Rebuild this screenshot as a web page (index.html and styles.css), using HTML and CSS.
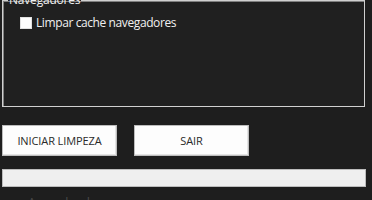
FILE: index.html
```html
<!DOCTYPE html>
<html lang="pt">
<head>
  <meta charset="UTF-8">
  <title>Limpeza</title>
  <meta name="viewport" content="width=device-width, initial-scale=1.0">
  <link rel="stylesheet" href="styles.css">
</head>
<body>

  <fieldset class="group">
    <legend>Navegadores</legend>
    <label class="check">
      <input type="checkbox" id="chkCache">
      <span>Limpar cache navegadores</span>
    </label>
  </fieldset>

  <div class="actions">
    <button id="btnIniciar">INICIAR LIMPEZA</button>
    <button id="btnSair">SAIR</button>
  </div>

  <div class="progress"><div class="bar"></div></div>

  <div class="status">Aguardando...</div>

</body>
</html>
```

FILE: styles.css
```css
body {
  font-family: 'Open Sans', 'Noto Sans', sans-serif;
  background: #1e1e1e;
  color: #f0f0f0;
  margin: 0;
  padding: 0;
  overflow: hidden;
}
.group {
  box-sizing: border-box;
  width: 363px;
  height: 115px;
  margin: -8px 0 0 2px;
  padding: 6px 0 0 2px;
  border: 1px solid #d0d0d0;
  box-shadow: inset 1px 1px 0 #808080;
  background: #202020;
}
.group legend {
  font-size: 12px;
  line-height: 16px;
  padding: 0 1px;
  margin-left: 3px;
  letter-spacing: -0.2px;
  color: #f0f0f0;
}
.check {
  display: flex;
  align-items: center;
  gap: 4px;
  margin-left: 15px;
  font-size: 12px;
  letter-spacing: -0.4px;
}
.check input {
  appearance: none;
  width: 12px;
  height: 12px;
  margin: 0;
  background: #fcfcfc;
  border: 1px solid #e0e0e0;
}
.actions {
  display: flex;
  gap: 17px;
  margin: 18px 0 0 2px;
}
.actions button {
  width: 115px;
  height: 31px;
  padding: 0;
  font-family: 'Open Sans', sans-serif;
  font-size: 11px;
  letter-spacing: -0.1px;
  color: #2a2a2a;
  background: #fdfdfd;
  border: 1px solid #bdbdbd;
  box-shadow: inset -1px -1px 0 #e4e4e4;
  cursor: pointer;
}
.progress {
  box-sizing: border-box;
  width: 364px;
  height: 18px;
  margin: 13px 0 0 2px;
  background: #efefef;
  border: 1px solid #bcbcbc;
}
.bar {
  width: 0;
  height: 100%;
  background: #06b025;
}
.status {
  margin: 7px 0 0 28px;
  font-size: 12px;
  color: #4a4a4a;
}
```
